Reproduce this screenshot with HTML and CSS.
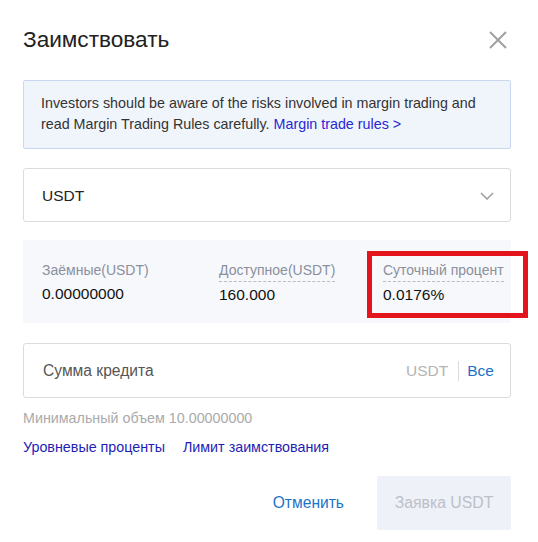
FILE: index.html
```html
<!DOCTYPE html>
<html lang="ru">
<head>
<meta charset="utf-8">
<title>Заимствовать</title>
<link rel="stylesheet" href="styles.css">
</head>
<body>
<div class="dialog">
  <div class="header">
    <h1 class="title">Заимствовать</h1>
    <svg class="close" width="18" height="18" viewBox="0 0 18 18"><path d="M1 1L17 17M17 1L1 17" stroke="#a0a0a0" stroke-width="2" fill="none"/></svg>
  </div>
  <div class="notice">
    <span class="notice-line">Investors should be aware of the risks involved in margin trading and</span>
    <span class="notice-line">read Margin Trading Rules carefully. <a class="notice-link">Margin trade rules &gt;</a></span>
  </div>
  <div class="select">
    <span class="select-value">USDT</span>
    <svg class="chevron" width="14" height="8" viewBox="0 0 14 8"><path d="M1 1L7 7L13 1" stroke="#a0a0a0" stroke-width="1.6" fill="none"/></svg>
  </div>
  <div class="stats">
    <div class="stat">
      <span class="stat-label">Заёмные(USDT)</span>
      <span class="stat-value">0.00000000</span>
    </div>
    <div class="stat">
      <span class="stat-label dotted">Доступное(USDT)</span>
      <span class="stat-value">160.000</span>
    </div>
    <div class="stat">
      <span class="stat-label dotted">Суточный процент</span>
      <span class="stat-value">0.0176%</span>
    </div>
    <div class="highlight"></div>
  </div>
  <div class="amount">
    <span class="placeholder">Сумма кредита</span>
    <span class="unit">USDT</span>
    <span class="sep"></span>
    <a class="all">Все</a>
  </div>
  <div class="min">Минимальный объем 10.00000000</div>
  <div class="links">
    <a class="link">Уровневые проценты</a>
    <a class="link">Лимит заимствования</a>
  </div>
  <div class="actions">
    <a class="cancel">Отменить</a>
    <button class="submit">Заявка USDT</button>
  </div>
</div>
</body>
</html>
```
FILE: styles.css
```css
* { box-sizing: border-box; }
html, body { margin: 0; padding: 0; background: #fff; }
body { font-family: "Liberation Sans", Arial, sans-serif; color: #222; }
.dialog { width: 538px; padding: 23px 27px 0 23px; }
.header { display: flex; justify-content: space-between; align-items: center; height: 34px; }
.title { margin: 0; font-size: 22.6px; font-weight: normal; color: #222; line-height: 34px; }
.close { margin-right: 4px; margin-top: 0; }
.notice { margin-top: 23px; background: #f0f5fc; border: 1px solid #c9d8f0; border-radius: 2px; padding: 12px 10px 13px 17px; font-size: 14.3px; line-height: 21px; color: #333; display: flex; flex-direction: column; align-items: flex-start; }
.notice-line { white-space: nowrap; }
.notice-link { color: #2828d2; }
.select { margin-top: 19px; height: 54px; border: 1px solid #dcdcdc; border-radius: 3px; display: flex; align-items: center; justify-content: space-between; padding: 1px 16px 0 18px; }
.select-value { font-size: 15.5px; color: #222; }
.stats { position: relative; margin-top: 18px; height: 83px; background: #f6f8fc; display: grid; grid-template-columns: 177px 164px 1fr; padding: 22px 0 0 19px; }
.stat { display: flex; flex-direction: column; align-items: flex-start; }
.stat-label { font-size: 14px; color: #8a909c; line-height: 16px; padding-bottom: 3px; }
.stat-label.dotted { border-bottom: 1px dashed #b8bcc4; }
.stat-value { font-size: 15.5px; color: #111; line-height: 20px; margin-top: 3px; }
.highlight { position: absolute; left: 344px; top: 11px; width: 161px; height: 67px; border: 5px solid #e3141b; }
.amount { margin-top: 20px; height: 55px; border: 1px solid #dcdcdc; border-radius: 3px; display: flex; align-items: center; padding: 0 16px 0 19px; }
.placeholder { font-size: 15.6px; color: #555; flex: 1; }
.unit { font-size: 15.5px; color: #b4b4b4; }
.sep { width: 1px; height: 20px; background: #dcdcdc; margin: 0 8px 0 10px; }
.all { font-size: 15.5px; color: #1a73c9; }
.min { margin-top: 11px; font-size: 14.3px; color: #aaa; line-height: 18px; }
.links { margin-top: 11px; display: flex; gap: 18px; font-size: 14.3px; line-height: 18px; }
.link { color: #1e1eb4; }
.actions { margin-top: 20px; display: flex; justify-content: flex-end; align-items: center; gap: 33px; }
.cancel { font-size: 15.6px; color: #1a73c9; }
.submit { width: 134px; height: 54px; border: none; border-radius: 2px; background: #eef1f7; color: #bcc0c8; font-family: "Liberation Sans", Arial, sans-serif; font-size: 15.8px; }
```
